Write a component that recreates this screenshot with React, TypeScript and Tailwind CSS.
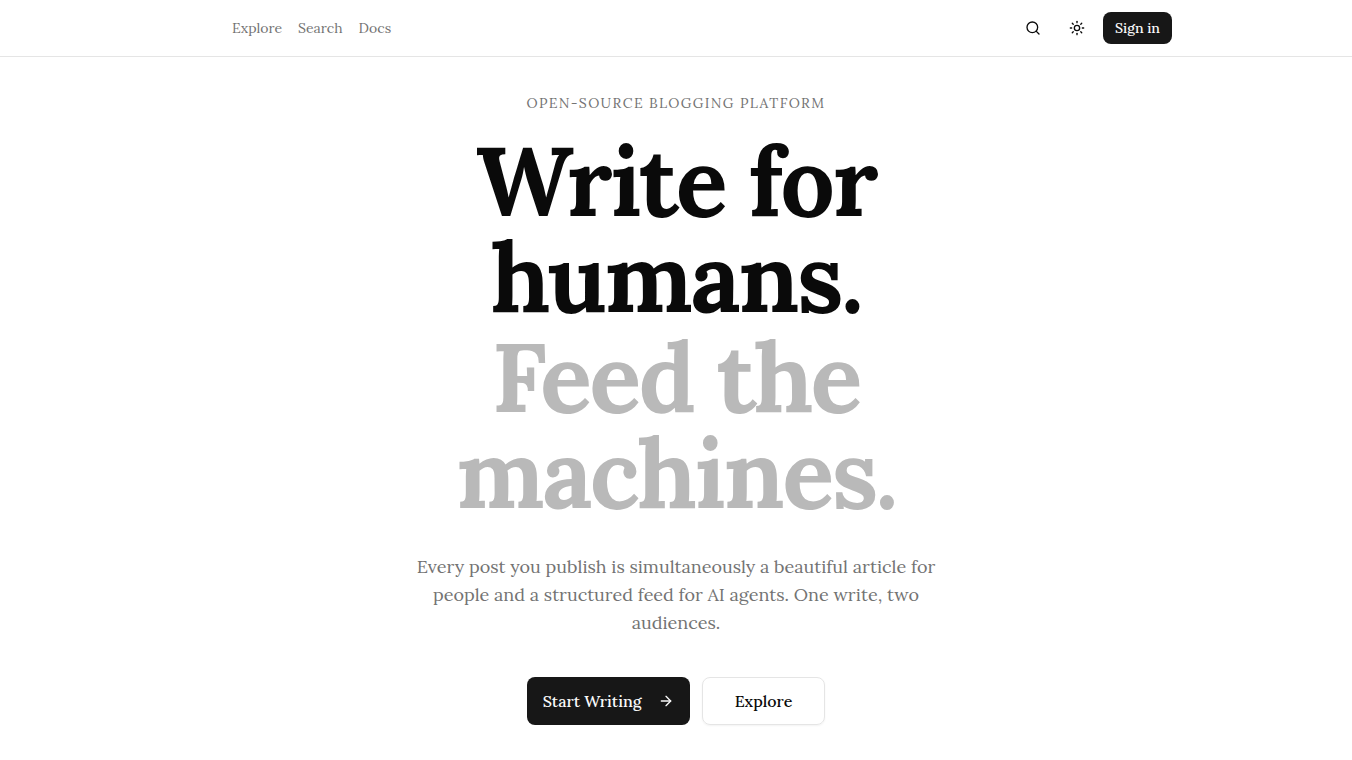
import { ArrowRight, Search, Sun } from 'lucide-react';

const navLinks = ['Explore', 'Search', 'Docs'];

function Header() {
  return (
    <header className="border-b border-neutral-200">
      <div className="mx-auto flex h-14 max-w-5xl items-center justify-between px-4">
        <nav className="flex items-center gap-4 pl-[52px] text-sm text-neutral-500">
          {navLinks.map((label) => (
            <a key={label} href="#" className="hover:text-neutral-950">{label}</a>
          ))}
        </nav>
        <div className="flex items-center gap-2">
          <button type="button" aria-label="Search" className="flex size-9 items-center justify-center rounded-lg hover:bg-neutral-100">
            <Search className="size-4" />
          </button>
          <button type="button" aria-label="Toggle theme" className="flex size-9 items-center justify-center rounded-lg hover:bg-neutral-100">
            <Sun className="size-4" />
          </button>
          <a href="#" className="flex h-8 items-center rounded-lg bg-neutral-900 px-3 text-sm font-medium text-neutral-50">Sign in</a>
        </div>
      </div>
    </header>
  );
}

function Hero() {
  return (
    <main className="mx-auto flex max-w-2xl flex-col items-center px-4 pt-9 pb-9 text-center">
      <p className="text-sm tracking-widest text-neutral-500 uppercase">Open-source blogging platform</p>
      <h1 className="mt-5 text-8xl leading-24 font-bold tracking-tight">
        <span className="block">Write for<br />humans.</span>
        <span className="mt-1 block text-[#b9b9b9]">Feed the<br />machines.</span>
      </h1>
      <p className="mt-8 max-w-[540px] text-lg leading-7 text-neutral-500">
        Every post you publish is simultaneously a beautiful article for people and a structured feed for AI agents. One write, two audiences.
      </p>
      <div className="mt-10 flex gap-3">
        <a href="#" className="flex h-12 items-center gap-4 rounded-lg bg-neutral-900 px-4 font-medium text-neutral-50">
          Start Writing
          <ArrowRight className="size-4" />
        </a>
        <a href="#" className="flex h-12 items-center rounded-lg border border-neutral-200 px-8 font-medium shadow-xs">Explore</a>
      </div>
    </main>
  );
}

export default function App() {
  return (
    <div className="min-h-screen bg-white font-[Lora,'Liberation_Serif',serif] text-neutral-950">
      <Header />
      <Hero />
    </div>
  );
}
